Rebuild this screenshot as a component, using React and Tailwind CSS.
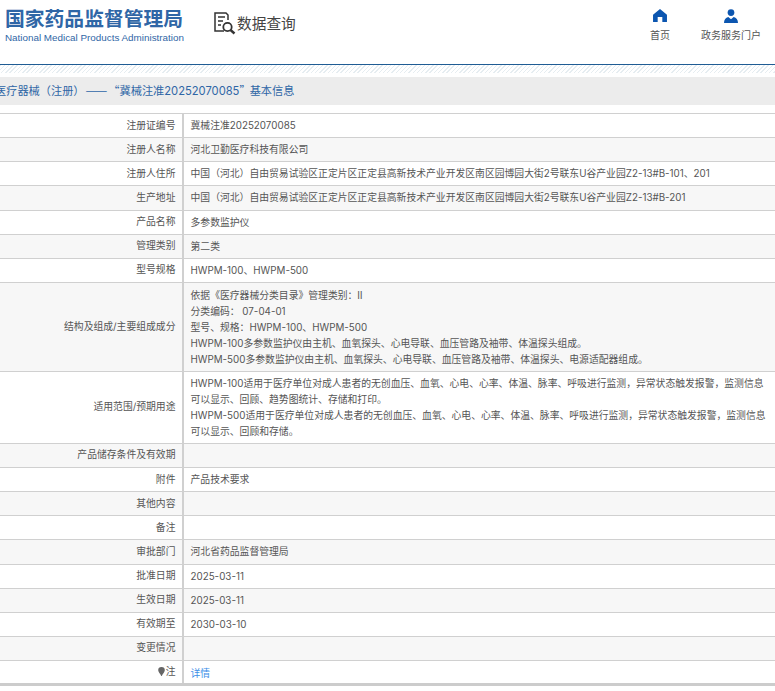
const ROWS = [
  { label: '注册证编号', value: '冀械注准20252070085' },
  { label: '注册人名称', value: '河北卫勤医疗科技有限公司' },
  { label: '注册人住所', value: '中国（河北）自由贸易试验区正定片区正定县高新技术产业开发区南区园博园大街2号联东U谷产业园Z2-13#B-101、201' },
  { label: '生产地址', value: '中国（河北）自由贸易试验区正定片区正定县高新技术产业开发区南区园博园大街2号联东U谷产业园Z2-13#B-201' },
  { label: '产品名称', value: '多参数监护仪' },
  { label: '管理类别', value: '第二类' },
  { label: '型号规格', value: 'HWPM-100、HWPM-500' },
  {
    label: '结构及组成/主要组成成分',
    pad: 'py-[4px]',
    lines: [
      '依据《医疗器械分类目录》管理类别：Ⅱ',
      '分类编码： 07-04-01',
      '型号、规格：HWPM-100、HWPM-500',
      'HWPM-100多参数监护仪由主机、血氧探头、心电导联、血压管路及袖带、体温探头组成。',
      'HWPM-500多参数监护仪由主机、血氧探头、心电导联、血压管路及袖带、体温探头、电源适配器组成。',
    ],
  },
  {
    label: '适用范围/预期用途',
    pad: 'py-[3.5px]',
    lines: [
      'HWPM-100适用于医疗单位对成人患者的无创血压、血氧、心电、心率、体温、脉率、呼吸进行监测，异常状态触发报警，监测信息',
      '可以显示、回顾、趋势图统计、存储和打印。',
      'HWPM-500适用于医疗单位对成人患者的无创血压、血氧、心电、心率、体温、脉率、呼吸进行监测，异常状态触发报警，监测信息',
      '可以显示、回顾和存储。',
    ],
  },
  { label: '产品储存条件及有效期', value: '' },
  { label: '附件', value: '产品技术要求' },
  { label: '其他内容', value: '' },
  { label: '备注', value: '' },
  { label: '审批部门', value: '河北省药品监督管理局' },
  { label: '批准日期', value: '2025-03-11' },
  { label: '生效日期', value: '2025-03-11' },
  { label: '有效期至', value: '2030-03-10' },
  { label: '变更情况', value: '' },
];

function SearchDocIcon() {
  return (
    <svg width="24" height="24" viewBox="0 0 24 24" fill="none" stroke="#333" className="shrink-0">
      <path d="M11 20H2V2h11l2 2v5" strokeWidth="1.5" />
      <path d="M5 6h7M5 10h5M5 14h3" strokeWidth="1.5" />
      <circle cx="14.5" cy="16" r="4.2" strokeWidth="1.8" />
      <path d="M17.5 19l4 3.5" strokeWidth="2.4" />
    </svg>
  );
}

function HomeIcon() {
  return (
    <svg width="14" height="13" viewBox="0 0 15 14" fill="#0c56b0">
      <path d="M7.5 0L15 6.2V14H10V8.5H5V14H0V6.2z" />
    </svg>
  );
}

function UserIcon() {
  return (
    <svg width="14" height="14" viewBox="0 0 15 15" fill="#0c56b0">
      <circle cx="7.5" cy="3.8" r="3.6" />
      <path d="M0 15c0-3.4 1.8-6 4.6-6.4L7.5 11l2.9-2.4C13.200 9 15 11.600 15 15z" />
    </svg>
  );
}

function PinIcon() {
  return (
    <svg width="7" height="9" viewBox="0 0 7 9" fill="#666">
      <path d="M3.500 0a3.300 3.300 0 0 1 3.300 3.300c0 1.900-2 3.200-3 5.700h-.6c-1-2.500-3-3.800-3-5.700A3.300 3.300 0 0 1 3.500 0z" />
    </svg>
  );
}

export default function App() {
  return (
    <div className="h-[691px] w-[775px] overflow-hidden bg-white font-['Inter','Noto_Sans_CJK_SC',sans-serif] text-[9.82px] text-[#555]">
      <header className="flex h-16 items-start font-['Noto_Sans','Noto_Sans_CJK_SC',sans-serif]">
        <div className="ml-[5px] w-[179px] pt-[7px]">
          <div className="whitespace-nowrap text-[19.8px] font-bold leading-6 text-[#2f66a6]">国家药品监督管理局</div>
          <div className="mt-[1px] whitespace-nowrap font-['Liberation_Sans',sans-serif] text-[9.85px] leading-[11px] text-[#2f66a6]">
            National Medical Products Administration
          </div>
        </div>
        <div className="ml-[29px] mt-[11px] flex items-center">
          <SearchDocIcon />
          <span className="text-[14.7px] leading-6 text-[#444]">数据查询</span>
        </div>
        <nav className="ml-auto mt-[9px] flex items-start text-[10px]">
          <div className="flex w-[40px] flex-col items-center gap-[7px]">
            <HomeIcon />
            <span className="leading-[13px]">首页</span>
          </div>
          <div className="ml-[21px] mr-[14px] flex w-[60px] flex-col items-center gap-[6px]">
            <UserIcon />
            <span className="whitespace-nowrap leading-[13px]">政务服务门户</span>
          </div>
        </nav>
      </header>

      <div className="h-[13px] border-t-[1.5px] border-[#1f5c94]">
        <div className="h-[8px] bg-[repeating-linear-gradient(135deg,#e6edf1_0,#e6edf1_1px,#ffffff_1px,#ffffff_3px)]" />
      </div>

      <div className="flex h-[28px] items-center bg-[#ececec]">
        <span className="-ml-[5px] whitespace-nowrap text-[11.2px] text-[#2f66a6]">
          医疗器械（注册）<span className="ml-[1px] font-['Noto_Sans_CJK_SC'] text-[13px] leading-none">——</span>
          <span className="ml-[1px] font-['Noto_Sans_CJK_SC']">“</span>冀械注准20252070085<span className="font-['Noto_Sans_CJK_SC']">”</span>
          <span className="-ml-[1px]">基本信息</span>
        </span>
      </div>

      <table className="mt-2 w-full table-fixed border-collapse border-b-[3px] border-b-[#ccc]">
        <colgroup>
          <col className="w-[182.5px]" />
          <col />
        </colgroup>
        <tbody>
          {ROWS.map((row, i) => (
            <tr key={row.label} className={i % 2 === 1 ? 'bg-[#f7f7f7]' : 'bg-white'}>
              <td className="h-[24.14px] border-y border-r-2 border-[#d0d0d0] px-[6px] pb-px pt-0 text-right leading-[15px]">
                {row.label}
              </td>
              <td className={`border-y border-[#d0d0d0] pl-[7px] pr-2 leading-[16px] ${row.pad || 'pb-px pt-0'}`}>
                {row.lines ? row.lines.map((l) => <div key={l} className="whitespace-nowrap">{l}</div>) : row.value}
              </td>
            </tr>
          ))}
          <tr className="bg-white">
            <td className="h-[24.14px] border-y border-r-2 border-[#d0d0d0] px-[6px] py-0 text-right">
              <span className="inline-flex items-center justify-end gap-[1px]">
                <PinIcon />注
              </span>
            </td>
            <td className="border-y border-[#d0d0d0] pl-[7px] pt-[2px] text-[#3c8ee8]">详情</td>
          </tr>
        </tbody>
      </table>
    </div>
  );
}
